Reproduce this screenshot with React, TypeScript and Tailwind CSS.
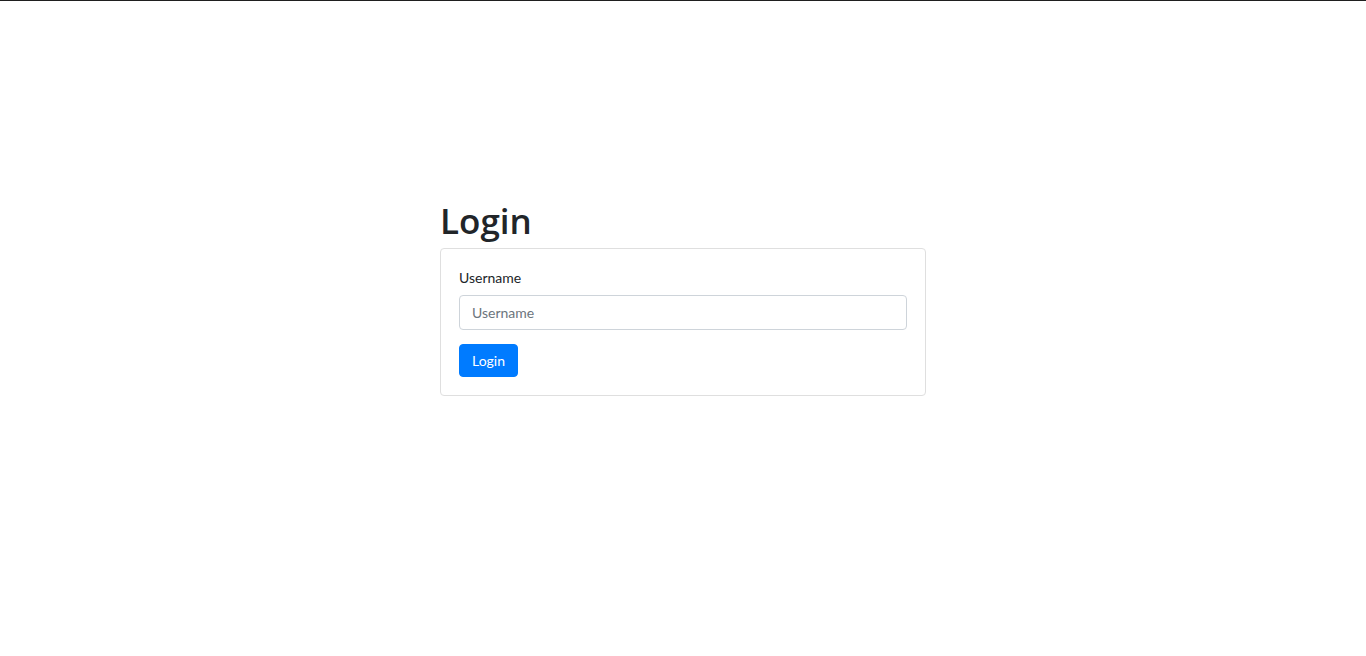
export default function App() {
  return (
    <div className="min-h-screen bg-white border-t border-[#1f1f1f] text-[#212529] text-[14px] leading-[1.5] font-['Lato','Noto_Sans',sans-serif]">
      <div className="w-[486px] mx-auto pt-[199px]">
        <h1 className="text-[35px] leading-[1.2] font-semibold mb-[6px] font-['Open_Sans',sans-serif]">Login</h1>
        <div className="border border-[#dfdfdf] rounded-[4px] p-[18px]">
          <form onSubmit={(e) => e.preventDefault()}>
            <div className="mb-[14px]">
              <label htmlFor="username" className="block mb-[7px]">
                Username
              </label>
              <input
                id="username"
                type="text"
                placeholder="Username"
                className="block w-full h-[35px] px-[12px] py-[6px] border border-[#ced4da] rounded-[4px] text-[#495057] placeholder:text-[#6c757d] outline-none"
              />
            </div>
            <button
              type="submit"
              className="bg-[#007bff] text-white px-[12px] py-[5px] rounded-[4px] leading-[1.5] border border-[#007bff]"
            >
              Login
            </button>
          </form>
        </div>
      </div>
    </div>
  );
}
